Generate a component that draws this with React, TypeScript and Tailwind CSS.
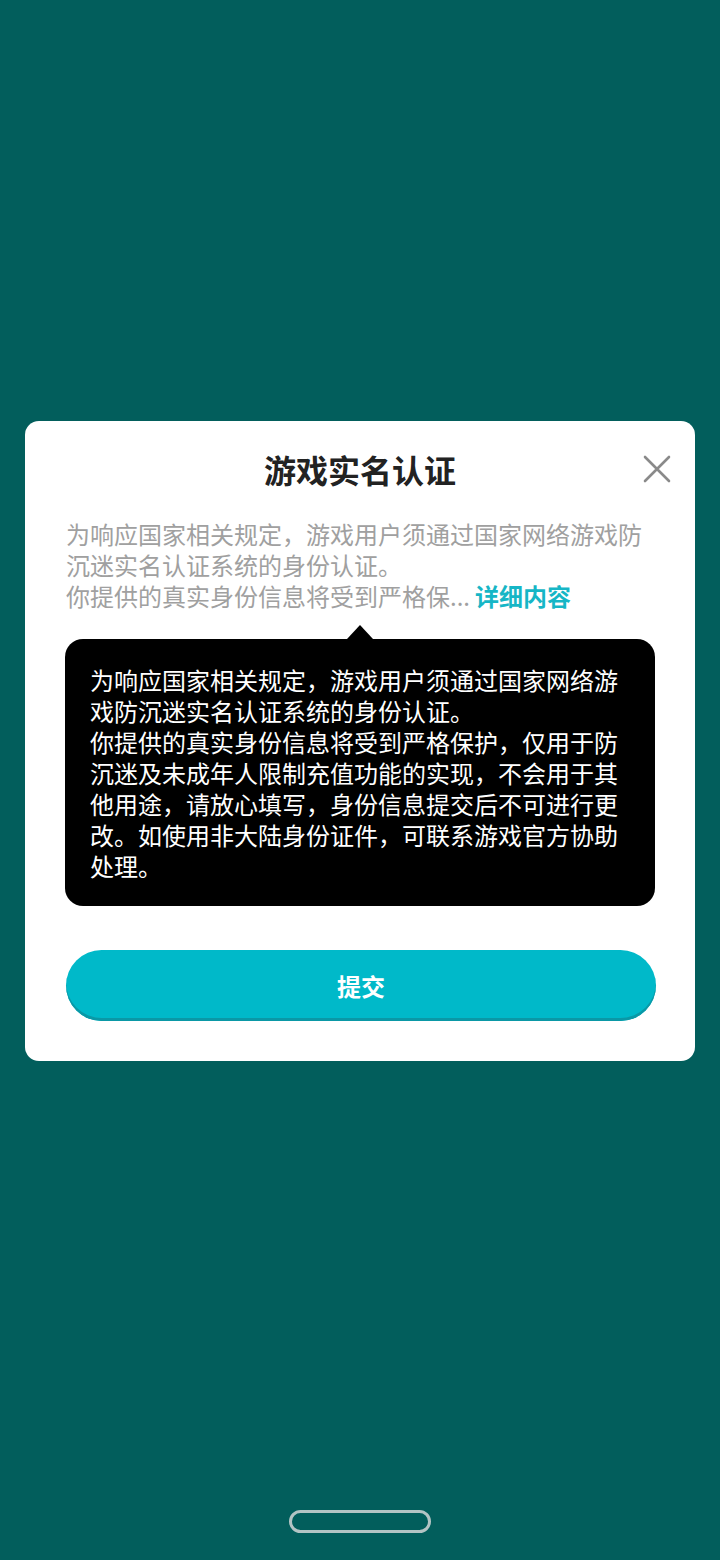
import React from "react";

export default function App() {
  const font = { fontFamily: '"Noto Sans CJK SC", "Noto Sans", sans-serif' };
  return (
    <div className="w-[720px] h-[1560px] bg-[#025e5c] flex flex-col items-center" style={font}>
      <div className="relative mt-[421px] w-[670px] bg-white rounded-[14px] px-[41px] pt-[28px] pb-[40px] flex flex-col">
        <div className="text-center text-[32px] leading-[40px] font-bold text-[#222222]">游戏实名认证</div>
        <div className="absolute right-[24px] top-[34px] w-[28px] h-[28px]">
          <svg width="28" height="28" viewBox="0 0 28 28">
            <path d="M2 2 L26 26 M26 2 L2 26" stroke="#8a8a8a" strokeWidth="2.6" strokeLinecap="round" />
          </svg>
        </div>
        <div className="mt-[29px] text-[24px] leading-[31px] text-[#a0a0a0]">
          <div>为响应国家相关规定，游戏用户须通过国家网络游戏防沉迷实名认证系统的身份认证。</div>
          <div className="flex items-center h-[31px]">
            <span className="leading-[31px]">你提供的真实身份信息将受到严格保...</span>
            <span className="ml-[5px] leading-[31px] font-bold text-[#16b6c6]">详细内容</span>
          </div>
        </div>
        <div className="mt-[14px] flex flex-col items-center">
          <div className="w-0 h-0 border-l-[13px] border-r-[13px] border-b-[14px] border-l-transparent border-r-transparent border-b-black" />
          <div className="w-[590px] bg-black rounded-[18px] pl-[25px] pr-[20px] pt-[25px] pb-[25px] text-white text-[24px] leading-[31px]">
            为响应国家相关规定，游戏用户须通过国家网络游戏防沉迷实名认证系统的身份认证。
            <br />
            你提供的真实身份信息将受到严格保护，仅用于防沉迷及未成年人限制充值功能的实现，不会用于其他用途，请放心填写，身份信息提交后不可进行更改。如使用非大陆身份证件，可联系游戏官方协助处理。
          </div>
        </div>
        <button className="mt-[44px] w-[590px] h-[71px] rounded-full bg-[#00b9c9] shadow-[inset_0_-3px_0_#0a98a6] text-white text-[24px] font-bold flex items-center justify-center">
          提交
        </button>
      </div>
      <div className="mt-[449px] w-[142px] h-[23px] rounded-full border-[3px] border-[#b3c4c4]" />
    </div>
  );
}
